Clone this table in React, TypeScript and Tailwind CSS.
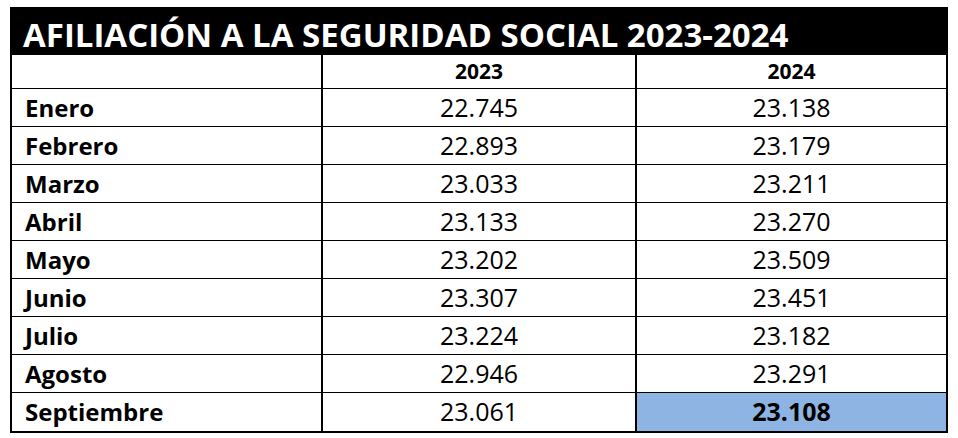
const rows: [string, string, string][] = [
  ["Enero", "22.745", "23.138"],
  ["Febrero", "22.893", "23.179"],
  ["Marzo", "23.033", "23.211"],
  ["Abril", "23.133", "23.270"],
  ["Mayo", "23.202", "23.509"],
  ["Junio", "23.307", "23.451"],
  ["Julio", "23.224", "23.182"],
  ["Agosto", "22.946", "23.291"],
  ["Septiembre", "23.061", "23.108"],
];

export default function App() {
  return (
    <div
      className="h-[438px] w-[958px] bg-white pt-[7px] pl-[10px]"
      style={{ fontFamily: '"Open Sans", "Liberation Sans", sans-serif' }}
    >
      <div className="w-[938px] border-2 border-black">
        <div className="flex h-[46px] items-center bg-black pt-[4px] pl-[11px] text-[33px] font-bold leading-none text-white">
          AFILIACIÓN A LA SEGURIDAD SOCIAL 2023-2024
        </div>
        <div className="grid grid-cols-[311px_314px_1fr] text-black">
          <div className="h-[34px] border-r-2 border-b border-black" />
          <div className="flex h-[34px] items-center justify-center border-r-2 border-b border-black text-[21px] font-bold">
            2023
          </div>
          <div className="flex h-[34px] items-center justify-center border-b border-black text-[21px] font-bold">
            2024
          </div>
          {rows.map(([month, a, b], i) => {
            const last = i === rows.length - 1;
            return (
              <>
                <div
                  key={month + "m"}
                  className={
                    "flex h-[38px] items-center border-r-2 border-black pl-[13px] text-[24px] font-bold " +
                    (last ? "" : "border-b")
                  }
                >
                  {month}
                </div>
                <div
                  key={month + "a"}
                  className={
                    "flex h-[38px] items-center justify-center border-r-2 border-black text-[25px] " +
                    (last ? "" : "border-b")
                  }
                >
                  {a}
                </div>
                <div
                  key={month + "b"}
                  className={
                    last
                      ? "flex h-[38px] items-center justify-center bg-[#8db4e2] text-[25px] font-bold"
                      : "flex h-[38px] items-center justify-center border-b border-black text-[25px]"
                  }
                >
                  {b}
                </div>
              </>
            );
          })}
        </div>
      </div>
    </div>
  );
}
